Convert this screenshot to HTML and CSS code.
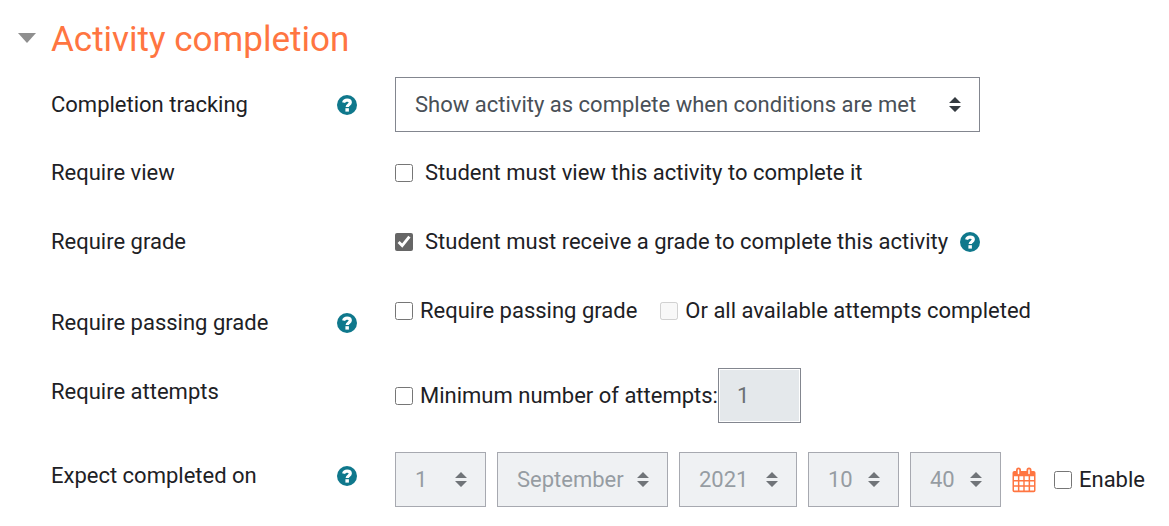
FILE: index.html
```html
<!DOCTYPE html>
<html lang="en">
<head>
    <meta charset="UTF-8">
    <meta name="viewport" content="width=device-width, initial-scale=1.0">
    <title>Activity completion</title>
    <link rel="stylesheet" href="styles.css">
</head>
<body>
    <!-- Shared help icon -->
    <svg class="sprite" width="0" height="0" aria-hidden="true">
        <symbol id="help" viewBox="0 0 20 20">
            <circle cx="10" cy="10" r="10" fill="#0f788c"/>
            <path d="M6.600 7.600C7.100 5.900 8.300 5.200 10.100 5.200c2 0 3.200 .9 3.200 2.300 0 2.300-3.100 2.100-3.100 4.500" fill="none" stroke="#fff" stroke-width="3.200"/>
            <path d="M8.400 13.200h3.500v3.400H8.400z" fill="#fff"/>
        </symbol>
    </svg>

    <form class="completion">
        <h3 class="section-title">
            <a href="#settings"><span class="caret"></span>Activity completion</a>
        </h3>

        <div class="settings" id="settings">
            <div class="row row-center">
                <div class="row-label">
                    <label for="tracking">Completion tracking</label>
                    <button type="button" class="help" aria-label="Help with completion tracking"><svg><use href="#help"/></svg></button>
                </div>
                <div class="row-field">
                    <select id="tracking" class="select select-tracking">
                        <option>Show activity as complete when conditions are met</option>
                    </select>
                </div>
            </div>

            <div class="row">
                <div class="row-label">Require view</div>
                <div class="row-field">
                    <label class="check check-wide"><input type="checkbox">Student must view this activity to complete it</label>
                </div>
            </div>

            <div class="row">
                <div class="row-label">Require grade</div>
                <div class="row-field">
                    <label class="check check-wide"><input type="checkbox" checked>Student must receive a grade to complete this activity</label>
                    <button type="button" class="help help-after" aria-label="Help with require grade"><svg><use href="#help"/></svg></button>
                </div>
            </div>

            <div class="row">
                <div class="row-label row-label-low">
                    <span>Require passing grade</span>
                    <button type="button" class="help" aria-label="Help with require passing grade"><svg><use href="#help"/></svg></button>
                </div>
                <div class="row-field row-field-spaced">
                    <label class="check"><input type="checkbox">Require passing grade</label>
                    <label class="check"><input type="checkbox" disabled>Or all available attempts completed</label>
                </div>
            </div>

            <div class="row">
                <div class="row-label row-label-low">Require attempts</div>
                <div class="row-field">
                    <label class="check"><input type="checkbox">Minimum number of attempts:</label>
                    <input type="text" class="attempts" value="1" aria-label="Minimum number of attempts" disabled>
                </div>
            </div>

            <div class="row">
                <div class="row-label row-label-low">
                    <span>Expect completed on</span>
                    <button type="button" class="help" aria-label="Help with expect completed on"><svg><use href="#help"/></svg></button>
                </div>
                <div class="row-field row-field-date">
                    <select class="select select-short" aria-label="Day" disabled><option>1</option></select>
                    <select class="select select-month" aria-label="Month" disabled><option>September</option></select>
                    <select class="select select-year" aria-label="Year" disabled><option>2021</option></select>
                    <select class="select select-short" aria-label="Hour" disabled><option>10</option></select>
                    <select class="select select-short" aria-label="Minute" disabled><option>40</option></select>
                    <a href="#calendar" class="calendar" aria-label="Calendar">
                        <svg viewBox="0 0 24 26">
                            <path fill="#ff7541" fill-rule="evenodd" d="M2.300 4H4V3a2.500 2.500 0 0 1 5 0v1h5.500V3a2.500 2.500 0 0 1 5 0v1h2.200A1.800 1.800 0 0 1 23.500 5.800V23.400a1.800 1.800 0 0 1-1.800 1.800H2.300a1.800 1.800 0 0 1-1.800-1.800V5.800A1.800 1.800 0 0 1 2.300 4zM2 9.200v3.700h3.900v-3.700zM7.400 9.200v3.700h3.900v-3.700zM12.700 9.200v3.700h3.900v-3.700zM18.100 9.200v3.700H22v-3.700zM2 14.500v3.700h3.900v-3.700zM7.400 14.500v3.700h3.900v-3.700zM12.700 14.500v3.700h3.900v-3.700zM18.100 14.500v3.700H22v-3.700zM2 19.700v3.700h3.900v-3.700zM7.400 19.700v3.700h3.900v-3.700zM12.700 19.700v3.700h3.900v-3.700zM18.100 19.700v3.700H22v-3.700z"/>
                            <path d="M6.500 3v3.500M17 3v3.500" stroke="#fff" stroke-width="1.500" stroke-linecap="round"/>
                        </svg>
                    </a>
                    <label class="check"><input type="checkbox">Enable</label>
                </div>
            </div>
        </div>
    </form>
</body>
</html>
```

FILE: styles.css
```css
* {
    box-sizing: border-box;
}

body {
    margin: 0;
    background-color: #fff;
    color: #1d2125;
    font-family: Roboto, "Liberation Sans", sans-serif;
    font-size: 22px;
    line-height: 24px;
}

input,
select,
button {
    margin: 0;
    font: inherit;
}

.sprite {
    display: block;
}

.completion {
    padding: 18px 18px 20px;
}

.section-title {
    margin: 0 0 15px;
    font-size: 35px;
    font-weight: 400;
    line-height: 44px;
}

.section-title a {
    display: flex;
    align-items: center;
    gap: 15px;
    color: #ff7541;
    text-decoration: none;
}

.caret {
    margin-bottom: 5px;
    border: 9px solid transparent;
    border-top: 10px solid #8f8f8f;
    border-bottom: 0;
}

.settings {
    display: grid;
    gap: 29px;
    padding-left: 33px;
}

.row {
    display: grid;
    grid-template-columns: 306px 1fr;
    column-gap: 38px;
    align-items: start;
    min-height: 40px;
}

.row-center {
    align-items: center;
}

.row-label {
    display: flex;
    align-items: center;
    justify-content: space-between;
}

.row-label-low {
    padding-top: 12px;
}

.row-field {
    display: flex;
    align-items: center;
    white-space: nowrap;
}

.row-field-spaced {
    gap: 23px;
}

.row-field-date {
    gap: 11px;
}

.help {
    width: 20px;
    height: 20px;
    padding: 0;
    border: 0;
    background: none;
    cursor: pointer;
}

.help svg {
    display: block;
    width: 20px;
    height: 20px;
}

.help-after {
    margin-left: 12px;
}

.check {
    display: flex;
    align-items: center;
    gap: 7px;
}

.check-wide {
    gap: 12px;
}

.check input {
    width: 18px;
    height: 18px;
    accent-color: #666;
}

.select {
    height: 55px;
    padding: 0 19px;
    border: 1px solid #83868f;
    border-radius: 0;
    appearance: none;
    color: #495057;
    background: #fff url("data:image/svg+xml,%3Csvg xmlns='http://www.w3.org/2000/svg' viewBox='0 0 12 15'%3E%3Cpath fill='%23343a40' d='M0 6l6-6 6 6zM0 9h12l-6 6z'/%3E%3C/svg%3E") no-repeat right 18px center / 12px 15px;
}

.select:disabled {
    background-color: #e9ecef;
    color: #6a737b;
    opacity: 0.7;
}

.select-tracking {
    width: 585px;
}

.select-short {
    width: 91px;
}

.select-month {
    width: 171px;
}

.select-year {
    width: 118px;
}

.attempts {
    width: 83px;
    height: 55px;
    padding: 0 18px;
    border: 1px solid #83868f;
    box-shadow: inset 0 0 0 1px #fff;
    background-color: #e4e8eb;
    color: #6a7075;
}

.calendar {
    margin-right: 7px;
}

.calendar svg {
    display: block;
    width: 24px;
    height: 26px;
}
```
